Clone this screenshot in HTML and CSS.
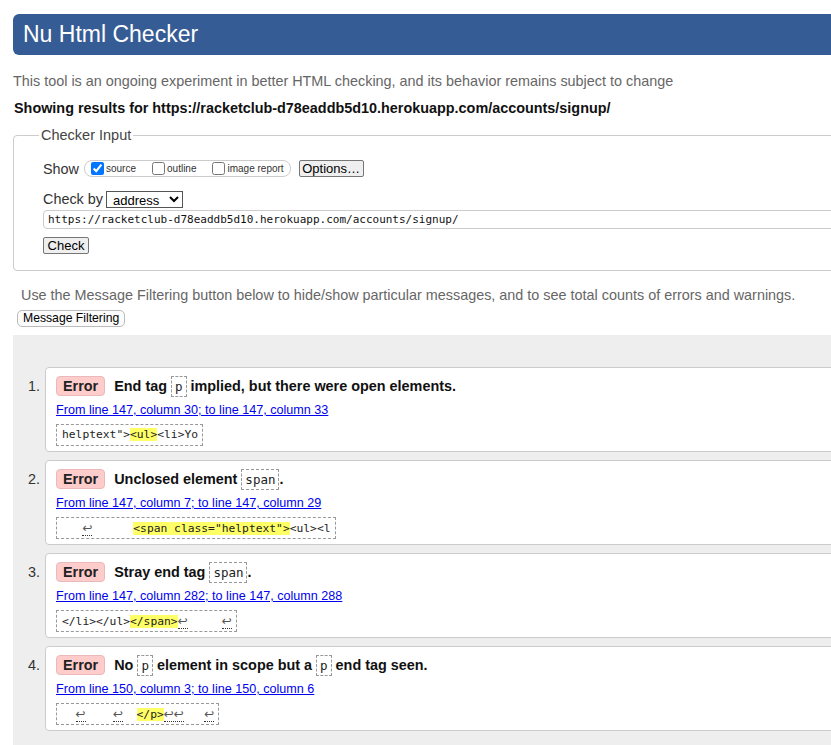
FILE: index.html
```html
<!DOCTYPE html>
<html lang="en">
<head>
<meta charset="utf-8">
<title>Nu Html Checker</title>
<link rel="stylesheet" href="styles.css">
</head>
<body>
<div class="page">
  <h1 class="banner">Nu Html Checker</h1>
  <p class="intro">This tool is an ongoing experiment in better HTML checking, and its behavior remains subject to change</p>
  <p class="showing">Showing results for https://racketclub-d78eaddb5d10.herokuapp.com/accounts/signup/</p>

  <fieldset class="checker-input">
    <legend>Checker Input</legend>
    <div class="show-row">
      <span class="show-label">Show</span>
      <span class="show-group">
        <label class="opt"><input type="checkbox" checked> source</label>
        <label class="opt"><input type="checkbox"> outline</label>
        <label class="opt"><input type="checkbox"> image report</label>
      </span>
      <button class="btn options-btn" type="button">Options…</button>
    </div>
    <div class="checkby-row">
      <span class="checkby-label">Check by</span>
      <select class="checkby-select"><option>address</option></select>
    </div>
    <input class="url-input" type="text" value="https://racketclub-d78eaddb5d10.herokuapp.com/accounts/signup/">
    <div class="check-wrap"><button class="btn check-btn" type="button">Check</button></div>
  </fieldset>

  <p class="filter-note">Use the Message Filtering button below to hide/show particular messages, and to see total counts of errors and warnings.</p>
  <button class="filter-btn" type="button">Message Filtering</button>

  <div class="results">
    <ol class="messages">
      <li class="item">
        <span class="num">1.</span>
        <div class="msg">
          <p class="msg-head"><span class="badge">Error</span> End tag <code class="tag">p</code> implied, but there were open elements.</p>
          <p class="loc"><a href="#">From line 147, column 30; to line 147, column 33</a></p>
          <code class="extract">helptext"&gt;<span class="hl">&lt;ul&gt;</span>&lt;li&gt;Yo</code>
        </div>
      </li>
      <li class="item">
        <span class="num">2.</span>
        <div class="msg">
          <p class="msg-head"><span class="badge">Error</span> Unclosed element <code class="tag">span</code>.</p>
          <p class="loc"><a href="#">From line 147, column 7; to line 147, column 29</a></p>
          <code class="extract">   <span class="lf">↩</span>      <span class="hl">&lt;span class="helptext"&gt;</span>&lt;ul&gt;&lt;l</code>
        </div>
      </li>
      <li class="item">
        <span class="num">3.</span>
        <div class="msg">
          <p class="msg-head"><span class="badge">Error</span> Stray end tag <code class="tag">span</code>.</p>
          <p class="loc"><a href="#">From line 147, column 282; to line 147, column 288</a></p>
          <code class="extract">&lt;/li&gt;&lt;/ul&gt;<span class="hl">&lt;/span&gt;</span><span class="lf">↩</span>     <span class="lf">↩</span></code>
        </div>
      </li>
      <li class="item">
        <span class="num">4.</span>
        <div class="msg">
          <p class="msg-head"><span class="badge">Error</span> No <code class="tag">p</code> element in scope but a <code class="tag">p</code> end tag seen.</p>
          <p class="loc"><a href="#">From line 150, column 3; to line 150, column 6</a></p>
          <code class="extract">  <span class="lf">↩</span>    <span class="lf">↩</span>  <span class="hl">&lt;/p&gt;</span><span class="lf">↩↩</span>   <span class="lf">↩</span></code>
        </div>
      </li>
    </ol>
  </div>
</div>
</body>
</html>
```
FILE: styles.css
```css
html, body {
  margin: 0;
  padding: 0;
  overflow: hidden;
  background: #fff;
}

body {
  font-family: "Liberation Sans", Arial, sans-serif;
  font-size: 14.4px;
  color: #222;
}

.page {
  width: 1100px;
  padding-left: 13px;
}

.banner {
  margin: 14px 0 0 0;
  height: 41px;
  line-height: 41px;
  padding-left: 10px;
  background: #365c95;
  color: #fff;
  font-size: 23px;
  font-weight: normal;
  border-radius: 6px;
}

.intro {
  margin: 16px 0 0 0;
  line-height: 20px;
  color: #666;
}

.showing {
  margin: 7px 0 0 1px;
  line-height: 20px;
  font-weight: bold;
  color: #111;
}

.checker-input {
  margin: 8px 0 0 0;
  padding: 15px 10px 16px 29px;
  border: 1px solid #ccc;
  border-radius: 4px;
  min-width: 0;
}

.checker-input legend {
  margin-left: -4px;
  padding: 0 2px;
  font-size: 14.5px;
  line-height: 18px;
  color: #444;
}

.show-row {
  display: flex;
  align-items: center;
  height: 19px;
}

.show-label {
  margin-right: 5px;
  color: #333;
}

.show-group {
  display: inline-flex;
  align-items: center;
  box-sizing: border-box;
  height: 17px;
  padding: 0 6px 0 6px;
  border: 1px solid #ccc;
  border-radius: 8px;
  font-size: 10px;
  color: #333;
  gap: 16px;
}

.opt {
  display: inline-flex;
  align-items: center;
}

.opt input {
  width: 13px;
  height: 13px;
  margin: 0 2px 0 0;
}

.btn {
  box-sizing: border-box;
  height: 17px;
  padding: 0 6px;
  font-family: "Liberation Sans", Arial, sans-serif;
  font-size: 13px;
  line-height: 15px;
  color: #000;
  background: #efefef;
  border: 1px solid #767676;
  border-radius: 2px;
}

.options-btn {
  margin-left: 8px;
  width: 65px;
  padding: 0;
}

.checkby-row {
  display: flex;
  align-items: center;
  height: 18px;
  margin-top: 12px;
}

.checkby-label {
  color: #333;
  margin-right: 3px;
}

.checkby-select {
  box-sizing: border-box;
  width: 77px;
  height: 17px;
  padding: 0 0 0 2px;
  font-family: "Liberation Sans", Arial, sans-serif;
  font-size: 13px;
  color: #000;
  border: 1px solid #555;
  border-radius: 0;
  background: #fff;
}

.url-input {
  display: block;
  box-sizing: border-box;
  width: 100%;
  height: 19px;
  margin: 2px 0 0 0;
  padding: 0 4px;
  border: 1px solid #ccc;
  border-radius: 4px;
  font-family: "DejaVu Sans Mono", "Liberation Mono", monospace;
  font-size: 11px;
  color: #111;
}

.check-wrap {
  margin-top: 8px;
}

.check-btn {
  width: 46px;
  padding: 0;
}

.filter-note {
  margin: 14px 0 0 8px;
  line-height: 20px;
  color: #666;
}

.filter-btn {
  display: block;
  box-sizing: border-box;
  margin: 5px 0 0 4px;
  height: 17px;
  padding: 0 5px;
  font-family: "Liberation Sans", Arial, sans-serif;
  font-size: 12.2px;
  line-height: 15px;
  color: #000;
  background: #fbfbfb;
  border: 1px solid #bbb;
  border-radius: 5px;
}

.results {
  margin-top: 8px;
  padding: 32px 0 40px 0;
  background: #eee;
}

.messages {
  list-style: none;
  margin: 0;
  padding: 0;
  display: flex;
  flex-direction: column;
  gap: 8px;
}

.item {
  display: flex;
}

.num {
  box-sizing: border-box;
  width: 32px;
  padding: 9px 5px 0 0;
  text-align: right;
  line-height: 21px;
  color: #333;
}

.msg {
  flex: 1;
  background: #fff;
  border: 1px solid #ccc;
  border-radius: 4px;
  padding: 8px 10px 5px 10px;
}

.msg-head {
  margin: 0;
  height: 21px;
  line-height: 21px;
  font-weight: bold;
  color: #111;
  white-space: nowrap;
}

.badge {
  display: inline-block;
  box-sizing: border-box;
  height: 20px;
  line-height: 18px;
  padding: 0 6px;
  margin-right: 5px;
  vertical-align: top;
  background: #fcc;
  border: 1px solid #ebb9b9;
  border-radius: 4px;
  color: #222;
}

.tag {
  display: inline-block;
  box-sizing: border-box;
  height: 21px;
  line-height: 19px;
  padding: 0 3px;
  vertical-align: top;
  border: 1px dashed #999;
  font-family: "DejaVu Sans Mono", "Liberation Mono", monospace;
  font-size: 12.5px;
  font-weight: normal;
  color: #222;
}

.loc {
  margin: 5px 0 0 0;
  line-height: 16px;
  font-size: 12.6px;
}

.loc a {
  color: #00e;
  text-decoration: underline;
}

.extract {
  display: inline-block;
  box-sizing: border-box;
  height: 22px;
  margin-top: 6px;
  padding: 0 4px 0 5px;
  line-height: 20px;
  border: 1px dashed #999;
  font-family: "DejaVu Sans Mono", "Liberation Mono", monospace;
  font-size: 11.3px;
  color: #222;
  white-space: pre;
}

.hl {
  background: #ff6;
}

.lf {
  font-family: "DejaVu Sans", sans-serif;
  font-size: 12px;
  color: #555;
  border-bottom: 1px dotted #333;
}
```
